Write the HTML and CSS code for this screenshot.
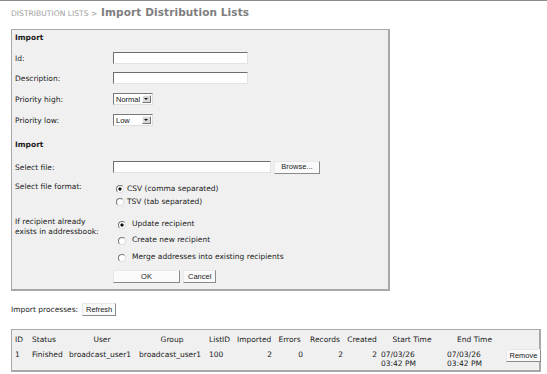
FILE: index.html
```html
<!DOCTYPE html>
<html lang="en">
<head>
  <meta charset="UTF-8">
  <title>Import Distribution Lists</title>
  <link rel="stylesheet" href="styles.css">
</head>
<body>

  <h1 class="title"><span class="crumb">DISTRIBUTION LISTS &gt;</span> Import Distribution Lists</h1>

  <!-- Import form -->
  <form class="panel">
    <div class="section">Import</div>

    <div class="row">
      <label class="label">Id:</label>
      <input class="text" type="text">
    </div>
    <div class="row">
      <label class="label">Description:</label>
      <input class="text" type="text">
    </div>
    <div class="row row-gap">
      <label class="label">Priority high:</label>
      <span class="select sel-normal">Normal<span class="arrow"></span></span>
    </div>
    <div class="row row-gap">
      <label class="label">Priority low:</label>
      <span class="select sel-low">Low<span class="arrow"></span></span>
    </div>

    <div class="section section-2">Import</div>

    <div class="row">
      <label class="label">Select file:</label>
      <input class="text file" type="text">
      <button type="button" class="btn browse">Browse...</button>
    </div>

    <div class="row-top format">
      <label class="label">Select file format:</label>
      <div class="choices">
        <label class="choice"><input type="radio" name="fmt" checked> CSV (comma separated)</label>
        <label class="choice"><input type="radio" name="fmt"> TSV (tab separated)</label>
      </div>
    </div>

    <div class="row-top exists">
      <label class="label label-wrap">If recipient already<br>exists in addressbook:</label>
      <div class="choices choices-wide">
        <label class="choice"><input type="radio" name="rcp" checked> Update recipient</label>
        <label class="choice"><input type="radio" name="rcp"> Create new recipient</label>
        <label class="choice"><input type="radio" name="rcp"> Merge addresses into existing recipients</label>
      </div>
    </div>

    <div class="row actions">
      <span class="label"></span>
      <button type="button" class="btn ok">OK</button>
      <button type="button" class="btn cancel">Cancel</button>
    </div>
  </form>

  <div class="processes">
    Import processes: <button type="button" class="btn refresh">Refresh</button>
  </div>

  <!-- Process list -->
  <div class="panel list">
    <table class="jobs">
      <colgroup>
        <col class="c-id"><col class="c-status"><col class="c-user"><col class="c-group">
        <col class="c-listid"><col class="c-imp"><col class="c-err"><col class="c-rec">
        <col class="c-cre"><col class="c-start"><col class="c-end"><col class="c-act">
      </colgroup>
      <thead>
        <tr>
          <th class="left">ID</th>
          <th class="left">Status</th>
          <th>User</th>
          <th>Group</th>
          <th class="left">ListID</th>
          <th class="left">Imported</th>
          <th>Errors</th>
          <th>Records</th>
          <th>Created</th>
          <th>Start Time</th>
          <th>End Time</th>
          <th></th>
        </tr>
      </thead>
      <tbody>
        <tr>
          <td>1</td>
          <td>Finished</td>
          <td>broadcast_user1</td>
          <td>broadcast_user1</td>
          <td>100</td>
          <td class="num">2</td>
          <td class="num">0</td>
          <td class="num">2</td>
          <td class="num">2</td>
          <td>07/03/26<br>03:42 PM</td>
          <td>07/03/26<br>03:42 PM</td>
          <td><button type="button" class="btn remove">Remove</button></td>
        </tr>
      </tbody>
    </table>
  </div>

</body>
</html>
```

FILE: styles.css
```css
* {
  box-sizing: border-box;
}

body {
  margin: 0;
  padding: 0 6px 0 11px;
  border-top: 1px solid #8c8c8c;
  background: #fff;
  font-family: "DejaVu Sans", Verdana, sans-serif;
  font-size: 7.5px;
  color: #1a1a1a;
}

.title {
  margin: 0;
  height: 28px;
  padding-top: 3px;
  font-size: 10.5px;
  line-height: 17px;
  letter-spacing: 0.1px;
  color: #7e7e7e;
}

.crumb {
  font-size: 7.6px;
  font-weight: normal;
  letter-spacing: 0;
  color: #a0a0a0;
}

.panel {
  width: 379px;
  height: 262px;
  margin: 0;
  padding: 1px 4px 0 3px;
  background: #f0f0f0;
  border: 1px solid #a8a8a8;
  border-right-width: 2px;
  border-bottom-width: 2px;
}

.section {
  font-weight: bold;
  line-height: 14px;
  height: 14px;
  margin-bottom: 3px;
}

.section-2 {
  margin-top: 8px;
  margin-bottom: 5px;
}

.row {
  display: flex;
  align-items: center;
  height: 20px;
}

.row-gap {
  margin-top: 1px;
}

.row-top {
  display: flex;
  align-items: flex-start;
}

.label {
  width: 98px;
  flex: none;
}

.label-wrap {
  line-height: 10px;
  padding-top: 2px;
}

.text {
  width: 135px;
  height: 12px;
  margin: 0;
  padding: 0;
  background: #fff;
  border: 1px solid #e2e2e2;
  border-top-color: #6e6e6e;
  border-left-color: #6e6e6e;
}

.file {
  width: 158px;
}

.select {
  position: relative;
  display: inline-block;
  height: 12px;
  padding-left: 2px;
  line-height: 11px;
  font-family: "Liberation Sans", Arial, sans-serif;
  font-size: 7.5px;
  color: #111;
  background: #fff;
  border: 1px solid #7a7a7a;
  border-right-color: #ddd;
  border-bottom-color: #ddd;
}

.sel-normal {
  width: 40px;
}

.sel-low {
  width: 40px;
}

.arrow {
  position: absolute;
  right: 1px;
  top: 1px;
  width: 9px;
  height: 8px;
  background: #d8d8d8;
  border: 1px solid #f8f8f8;
  border-right-color: #777;
  border-bottom-color: #777;
}

.arrow::after {
  content: "";
  position: absolute;
  left: 1px;
  top: 2px;
  border-left: 2px solid transparent;
  border-right: 2px solid transparent;
  border-top: 2px solid #111;
}

.btn {
  height: 13px;
  margin: 0;
  padding: 0 4px;
  font-family: "Liberation Sans", Arial, sans-serif;
  font-size: 7.5px;
  line-height: 10px;
  color: #222;
  background: #fafafa;
  border: 1px solid #e8e8e8;
  border-right-color: #8a8a8a;
  border-bottom-color: #8a8a8a;
  border-radius: 0;
}

.browse {
  width: 46px;
  margin-left: 3px;
}

.format {
  margin-top: 5px;
  height: 33px;
}

.choices {
  display: flex;
  flex-direction: column;
  padding-left: 3px;
}

.choice {
  display: flex;
  align-items: center;
  gap: 3px;
  height: 13px;
}

.choice input {
  appearance: none;
  width: 8px;
  height: 8px;
  margin: 0;
  border-radius: 50%;
  background: #fff;
  border: 1px solid #777;
  border-right-color: #ddd;
  border-bottom-color: #ddd;
}

.choice input:checked {
  background: radial-gradient(circle, #111 0 1.4px, #fff 1.8px);
}

.exists {
  height: 53px;
}

.choices-wide {
  padding-left: 5px;
}

.choices-wide .choice {
  height: 16.5px;
  gap: 6px;
}

.choices-wide .choice input {
  margin-top: 3px;
}

.actions {
  height: 17px;
}

.ok {
  width: 67px;
}

.cancel {
  width: 33px;
  margin-left: 3px;
}

.processes {
  display: flex;
  align-items: center;
  gap: 4px;
  height: 38px;
  padding-bottom: 1px;
}

.refresh {
  width: 34px;
  padding: 0;
}

.list {
  width: 530px;
  height: 43px;
  padding: 2px 1px 0 1px;
}

.jobs {
  table-layout: fixed;
  width: 528px;
  border-collapse: collapse;
  font-size: 7.5px;
}

.jobs th {
  font-weight: normal;
  text-align: center;
  height: 14px;
  padding: 0 2px;
  white-space: nowrap;
}

.jobs td {
  vertical-align: top;
  line-height: 9px;
  padding: 4px 2px 0 2px;
  white-space: nowrap;
}

.jobs .left {
  text-align: left;
}

.jobs .num {
  text-align: right;
}

.c-id { width: 17px; }
.c-status { width: 37px; }
.c-user { width: 70px; }
.c-group { width: 70px; }
.c-listid { width: 28px; }
.c-imp { width: 39px; }
.c-err { width: 31px; }
.c-rec { width: 40px; }
.c-cre { width: 34px; }
.c-start { width: 66px; }
.c-end { width: 59px; }
.c-act { width: 37px; }

.remove {
  width: 35px;
  padding: 0;
  margin-top: -1px;
}
```
